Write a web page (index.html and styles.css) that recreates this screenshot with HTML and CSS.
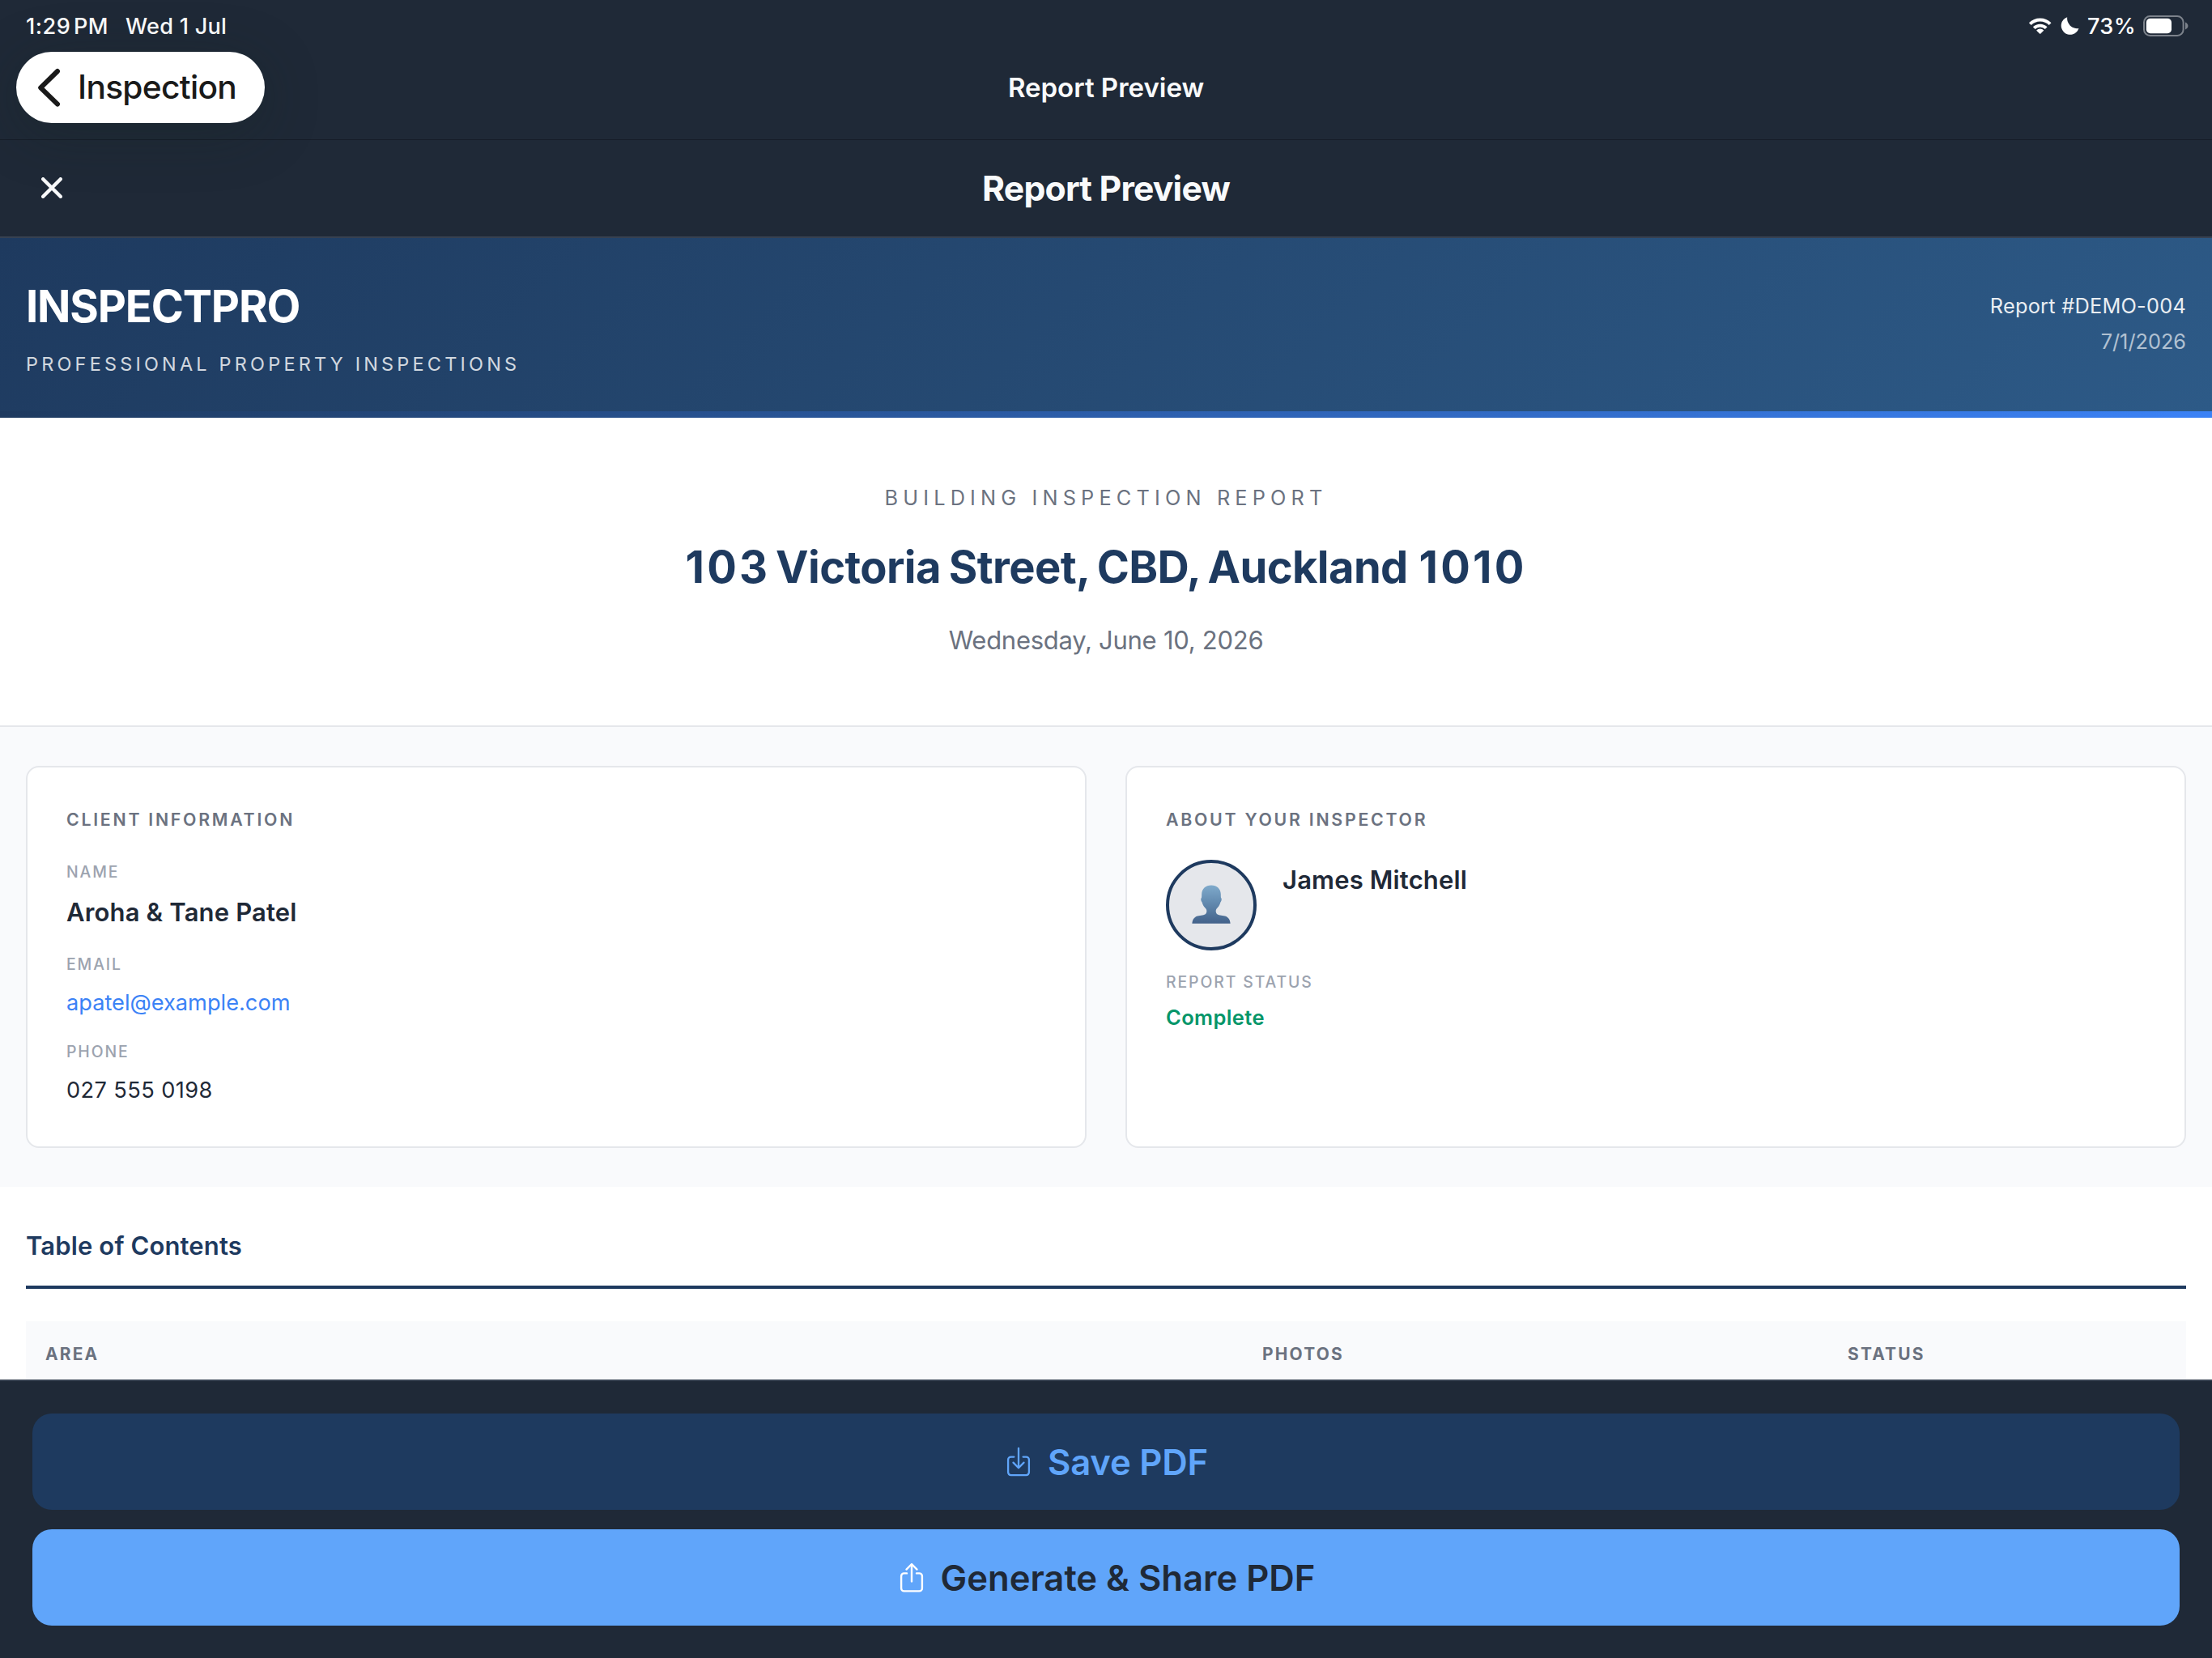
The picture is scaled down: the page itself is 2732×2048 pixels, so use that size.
FILE: index.html
```
<!DOCTYPE html>
<html lang="en">
<head>
<meta charset="utf-8">
<title>Report Preview</title>
<link rel="stylesheet" href="styles.css">
</head>
<body>
<div class="app">
  <div class="status-bar">
    <div class="status-left">
      <span class="status-time">1:29 PM</span>
      <span class="status-date">Wed 1 Jul</span>
    </div>
    <div class="status-right">
      <svg class="wifi" width="30" height="22" viewBox="0 0 30 22" aria-hidden="true">
        <path d="M2.3 8.6A17.6 17.6 0 0 1 27.1 8.6" fill="none" stroke="#fff" stroke-width="4"/>
        <path d="M7.2 13.7A10.6 10.6 0 0 1 22.2 13.7" fill="none" stroke="#fff" stroke-width="3.8"/>
        <path d="M14.7 20.2L10.9 16.6A5.6 5.6 0 0 1 18.5 16.6Z" fill="#fff" stroke="#fff" stroke-width="1.2" stroke-linejoin="round"/>
      </svg>
      <svg class="moon" width="23" height="22" viewBox="0 0 23 22" aria-hidden="true">
        <path d="M8.2 .2A11.1 11.1 0 1 0 22.4 14A12.4 12.4 0 0 1 8.2 .2Z" fill="#fff"/>
      </svg>
      <span class="status-battery-text">73%</span>
      <svg class="battery" width="56" height="26" viewBox="0 0 56 26" aria-hidden="true">
        <rect x="1" y="1" width="48.6" height="24" rx="7.5" fill="none" stroke="#7c828b" stroke-width="2"/>
        <rect x="3.8" y="3.8" width="31.2" height="18.4" rx="5" fill="#fff"/>
        <path d="M52 8.6C56.6 10.6 56.6 15.4 52 17.4Z" fill="#7c828b"/>
      </svg>
    </div>
  </div>

  <nav class="nav-bar">
    <button class="back-button" type="button">
      <svg width="30" height="50" viewBox="0 0 30 50" aria-hidden="true">
        <path d="M25 5L4.2 25.3L25 45.6" fill="none" stroke="#1a1a1a" stroke-width="6" stroke-linecap="round" stroke-linejoin="round"/>
      </svg>
      <span class="back-label">Inspection</span>
    </button>
    <span class="nav-title">Report Preview</span>
  </nav>

  <header class="modal-bar">
    <button class="close-button" type="button" aria-label="Close">
      <svg width="26" height="26" viewBox="0 0 26 26" aria-hidden="true">
        <path d="M2.2 2.2L23.8 23.8M23.8 2.2L2.2 23.8" fill="none" stroke="#f9fafb" stroke-width="4.4" stroke-linecap="round"/>
      </svg>
    </button>
    <h1 class="modal-title">Report Preview</h1>
  </header>

  <main class="report">
    <section class="brand-header">
      <div class="brand">
        <div class="brand-name">INSPECTPRO</div>
        <div class="brand-tagline">PROFESSIONAL PROPERTY INSPECTIONS</div>
      </div>
      <div class="brand-meta">
        <div class="report-number">Report #DEMO-004</div>
        <div class="report-date">7/1/2026</div>
      </div>
    </section>

    <section class="hero">
      <div class="hero-kicker">BUILDING INSPECTION REPORT</div>
      <h2 class="hero-address"><span class="digits street-number">103</span> Victoria Street, CBD, Auckland <span class="digits postcode">1010</span></h2>
      <div class="hero-date">Wednesday, June 10, 2026</div>
    </section>

    <section class="cards">
      <article class="card">
        <h3 class="card-title">CLIENT INFORMATION</h3>
        <div class="field field-name">
          <div class="label">NAME</div>
          <div class="value-strong">Aroha &amp; Tane Patel</div>
        </div>
        <div class="field">
          <div class="label">EMAIL</div>
          <div class="value value-email">apatel@example.com</div>
        </div>
        <div class="field">
          <div class="label">PHONE</div>
          <div class="value value-phone">027 555 0198</div>
        </div>
      </article>
      <article class="card">
        <h3 class="card-title">ABOUT YOUR INSPECTOR</h3>
        <div class="inspector">
          <div class="avatar">
            <svg width="48" height="48" viewBox="0 0 48 48" aria-hidden="true">
              <defs>
                <linearGradient id="bust" x1="0" y1="0" x2="0" y2="1">
                  <stop offset="0" stop-color="#7faacb"/>
                  <stop offset=".4" stop-color="#668eb3"/>
                  <stop offset="1" stop-color="#43628a"/>
                </linearGradient>
              </defs>
              <path fill="url(#bust)" d="M24 .5C31 .5 35.7 5 35.8 11.5C35.8 13.5 35.8 14.6 36 16C37.2 16.6 37 19.5 35.4 21.5C34.5 25 32.5 27.6 30.4 29.8C29.4 31.4 29.4 33.6 30.4 35.2C32.5 38 37 37.3 41 38.6C45.5 40 47.3 43.5 47.6 47.8H.4C.7 43.5 2.5 40 7 38.6C11 37.3 15.5 38 17.6 35.2C18.6 33.6 18.6 31.4 17.6 29.8C15.5 27.6 13.5 25 12.6 21.5C11 19.5 10.8 16.6 12 16C12.2 14.6 12.2 13.5 12.2 11.5C12.3 5 17 .5 24 .5Z"/>
            </svg>
          </div>
          <div class="inspector-name">James Mitchell</div>
        </div>
        <div class="label">REPORT STATUS</div>
        <div class="status-value">Complete</div>
      </article>
    </section>

    <section class="contents">
      <h3 class="contents-title">Table of Contents</h3>
      <div class="contents-head">
        <span>AREA</span>
        <span>PHOTOS</span>
        <span>STATUS</span>
      </div>
    </section>
  </main>

  <footer class="actions">
    <button class="action action-save" type="button">
      <svg width="36" height="40" viewBox="0 0 36 40" aria-hidden="true">
        <g fill="none" stroke="#60a5fa" stroke-width="2.3" stroke-linecap="round" stroke-linejoin="round">
          <path d="M12.4 13.6H8.6A3.5 3.5 0 0 0 5.1 17.1V32.6A3.5 3.5 0 0 0 8.6 36.1H27.4A3.5 3.5 0 0 0 30.9 32.6V17.1A3.5 3.5 0 0 0 27.4 13.6H23.6"/>
          <path d="M18 2.8V26.8M11.5 20.6L18 27.2L24.5 20.6"/>
        </g>
      </svg>
      <span>Save PDF</span>
    </button>
    <button class="action action-share" type="button">
      <svg width="36" height="40" viewBox="0 0 36 40" aria-hidden="true">
        <g fill="none" stroke="#fff" stroke-width="2.4" stroke-linecap="round" stroke-linejoin="round">
          <path d="M12 14.4H8.6A3.5 3.5 0 0 0 5.1 17.9V32.9A3.5 3.5 0 0 0 8.6 36.4H27.4A3.5 3.5 0 0 0 30.9 32.9V17.9A3.5 3.5 0 0 0 27.4 14.4H24"/>
          <path d="M18 24.4V3.4M11.5 9.6L18 3L24.5 9.6"/>
        </g>
      </svg>
      <span>Generate &amp; Share PDF</span>
    </button>
  </footer>
</div>
</body>
</html>
```
FILE: styles.css
```
* {
  box-sizing: border-box;
}

body {
  margin: 0;
  font-family: Inter, "Liberation Sans", sans-serif;
  background: #1f2937;
}

h1, h2, h3 {
  margin: 0;
}

button {
  margin: 0;
  padding: 0;
  border: 0;
  background: none;
  font-family: inherit;
}

svg {
  display: block;
  flex: none;
}

.app {
  display: flex;
  flex-direction: column;
  width: 2732px;
  height: 2048px;
  overflow: hidden;
  white-space: nowrap;
  background: #1f2937;
}

/* Device status bar */
.status-bar {
  display: flex;
  justify-content: space-between;
  align-items: center;
  height: 64px;
  padding: 0 29px 0 32px;
  color: #fff;
  font-size: 27.1px;
  font-weight: 450;
  line-height: 32px;
}

.status-left,
.status-right {
  display: flex;
  align-items: center;
}

.status-left {
  padding-top: 1px;
}

.status-time {
  letter-spacing: 0.5px;
  word-spacing: -4px;
}

.status-date {
  margin-left: 21px;
  letter-spacing: 0.25px;
}

.moon {
  margin-left: 10px;
}

.status-battery-text {
  margin-left: 10px;
  padding-top: 1px;
  letter-spacing: 0.4px;
}

.battery {
  margin-left: 9px;
}

/* Navigation bar */
.nav-bar {
  position: relative;
  z-index: 1;
  display: grid;
  grid-template-columns: 1fr auto 1fr;
  align-items: start;
  height: 109px;
  padding: 0 20px;
  border-bottom: 1px solid #161d29;
}

.back-button {
  display: flex;
  align-items: center;
  justify-self: start;
  gap: 20px;
  width: 307px;
  height: 88px;
  padding-left: 26px;
  border-radius: 44px;
  background: #fff;
  box-shadow: 0 12px 70px rgba(22, 36, 34, 0.32);
  color: #1a1a1a;
  font-size: 40.7px;
  font-weight: 500;
  letter-spacing: -0.71px;
}

.back-label {
  padding-bottom: 2px;
}

.nav-title {
  color: #f9fafb;
  font-size: 33px;
  font-weight: 600;
  line-height: 88px;
}

/* Modal title bar */
.modal-bar {
  display: grid;
  grid-template-columns: 1fr auto 1fr;
  align-items: center;
  height: 121px;
  padding: 0 51px;
  border-bottom: 2px solid #374151;
}

.close-button {
  justify-self: start;
  padding-bottom: 1px;
}

.modal-title {
  color: #f9fafb;
  font-size: 42.7px;
  font-weight: 700;
  line-height: 60px;
  letter-spacing: -0.79px;
}

/* Report document */
.report {
  flex: 1;
  min-height: 0;
  overflow: hidden;
  background: #fff;
}

.brand-header {
  display: flex;
  justify-content: space-between;
  height: 222px;
  padding: 48px 32px 0;
  background:
    linear-gradient(90deg, #1e3a5f, #3b82f6) bottom / 100% 8px no-repeat,
    linear-gradient(135deg, #1e3a5f 0%, #2d5a87 100%);
  color: #fff;
}

.brand-name {
  font-size: 54.3px;
  font-weight: 700;
  line-height: 72px;
  letter-spacing: -1.13px;
}

.brand-tagline {
  margin-top: 20px;
  font-size: 23.4px;
  line-height: 31px;
  letter-spacing: 4.24px;
  opacity: 0.8;
}

.brand-meta {
  padding-top: 14px;
  font-size: 25.3px;
  line-height: 44px;
  text-align: right;
}

.report-number {
  letter-spacing: 0.25px;
  opacity: 0.9;
}

.report-date {
  opacity: 0.63;
}

.hero {
  height: 382px;
  padding-top: 80px;
  border-bottom: 2px solid #e5e7eb;
  color: #6b7280;
  text-align: center;
}

.hero-kicker {
  font-size: 25.3px;
  line-height: 38px;
  letter-spacing: 6.16px;
}

.hero-address {
  margin-top: 32px;
  color: #1e3a5f;
  font-size: 54.3px;
  font-weight: 700;
  line-height: 68px;
  letter-spacing: -0.6px;
  word-spacing: -2.4px;
}

.digits {
  letter-spacing: 3.2px;
}

.street-number {
  margin-right: -3px;
}

.postcode {
  margin-left: 4px;
}

.hero-date {
  margin-top: 37px;
  font-size: 31px;
  line-height: 40px;
  letter-spacing: -0.27px;
}

/* Information cards */
.cards {
  display: grid;
  grid-template-columns: 1fr 1fr;
  gap: 48px;
  height: 568px;
  padding: 48px 32px;
  background: #f9fafc;
}

.card {
  padding: 48px;
  border: 2px solid #e5e7eb;
  border-radius: 16px;
  background: #fff;
}

.card-title {
  color: #6b7280;
  font-size: 21.3px;
  font-weight: 600;
  line-height: 32px;
  letter-spacing: 2.74px;
}

.field {
  margin-top: 28px;
}

.field-name {
  margin: 35px 0 30px;
}

.label {
  color: #9ca3af;
  font-size: 19.4px;
  font-weight: 500;
  line-height: 28px;
  letter-spacing: 1.9px;
}

.value-strong,
.inspector-name {
  color: #1f2937;
  font-size: 31px;
  font-weight: 600;
  line-height: 40px;
  letter-spacing: 0.16px;
}

.value-strong {
  margin-top: 16px;
}

.value {
  margin-top: 16px;
  font-size: 27.2px;
  line-height: 36px;
}

.value-email {
  color: #3b82f6;
}

.value-phone {
  color: #1f2937;
  letter-spacing: 0.4px;
}

.inspector {
  display: flex;
  gap: 32px;
  margin: 34px 0 25px;
}

.inspector-name {
  margin-top: 5px;
}

.avatar {
  display: flex;
  align-items: center;
  justify-content: center;
  width: 112px;
  height: 112px;
  padding-bottom: 2px;
  border: 4px solid #1e3a5f;
  border-radius: 50%;
  background: #e5e7eb;
}

.status-value {
  margin-top: 13px;
  color: #059669;
  font-size: 25.5px;
  font-weight: 600;
  line-height: 34px;
  letter-spacing: 0.4px;
}

/* Table of contents */
.contents {
  padding: 53px 32px 0;
}

.contents-title {
  padding-bottom: 29px;
  border-bottom: 4px solid #1e3a5f;
  color: #1e3a5f;
  font-size: 31px;
  font-weight: 600;
  line-height: 40px;
  letter-spacing: 0.13px;
}

.contents-head {
  display: grid;
  grid-template-columns: 1503px 723px 442px;
  margin-top: 40px;
  padding: 25px 0 24px;
  background: #f9fafc;
  color: #6b7280;
  font-size: 20.9px;
  font-weight: 700;
  line-height: 32px;
  letter-spacing: 2.2px;
}

.contents-head span {
  padding-left: 24px;
}

/* Bottom actions */
.actions {
  display: flex;
  flex-direction: column;
  gap: 24px;
  height: 344px;
  padding: 40px;
  border-top: 2px solid #374151;
}

.action {
  display: flex;
  flex: 1;
  align-items: center;
  justify-content: center;
  gap: 18px;
  border-radius: 24px;
  font-size: 43.6px;
  font-weight: 600;
}

.action span {
  padding-top: 1px;
}

.action-save {
  background: #1e3a5f;
  color: #60a5fa;
  letter-spacing: -0.2px;
}

.action-share {
  background: #60a5fa;
  color: #1f2937;
}
```
